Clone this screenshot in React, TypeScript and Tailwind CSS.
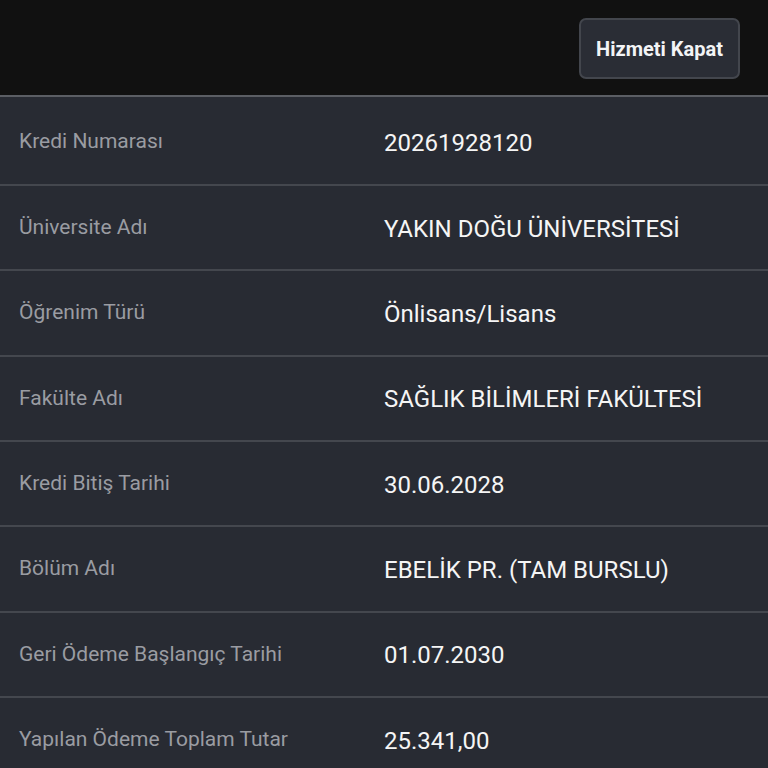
import React from "react";

const ROWS = [
  { label: "Kredi Numarası", value: "20261928120" },
  { label: "Üniversite Adı", value: "YAKIN DOĞU ÜNİVERSİTESİ" },
  { label: "Öğrenim Türü", value: "Önlisans/Lisans" },
  { label: "Fakülte Adı", value: "SAĞLIK BİLİMLERİ FAKÜLTESİ" },
  { label: "Kredi Bitiş Tarihi", value: "30.06.2028" },
  { label: "Bölüm Adı", value: "EBELİK PR. (TAM BURSLU)" },
  { label: "Geri Ödeme Başlangıç Tarihi", value: "01.07.2030" },
  { label: "Yapılan Ödeme Toplam Tutar", value: "25.341,00" },
];

export default function App() {
  return (
    <div
      className="flex h-[768px] w-[768px] flex-col overflow-hidden bg-[#282b33]"
      style={{ fontFamily: "Roboto, 'Noto Sans', sans-serif" }}
    >
      <header className="flex h-[97px] shrink-0 items-start justify-end border-b-2 border-[#5b5e64] bg-[#111111] pr-[28px] pt-[18px]">
        <button
          type="button"
          className="flex h-[61px] w-[161px] items-center justify-center rounded-[7px] border-2 border-[#43464d] bg-[#2a2d35] text-[20px] font-bold text-[#f3f4f6]"
        >
          Hizmeti Kapat
        </button>
      </header>

      <main className="flex flex-col">
        {ROWS.map((row, i) => (
          <div
            key={row.label}
            className={
              i === 0
                ? "flex h-[89px] shrink-0 items-center border-b-2 border-[#44474e] pt-[2px]"
                : "flex h-[85.33px] shrink-0 items-center border-b-2 border-[#44474e]"
            }
          >
            <span className="w-[384px] shrink-0 pl-[19px] text-[21px] text-[#9a9ca2]">
              {row.label}
            </span>
            <span className="pt-[2px] text-[24px] text-[#f5f5f5]">{row.value}</span>
          </div>
        ))}
      </main>
    </div>
  );
}
